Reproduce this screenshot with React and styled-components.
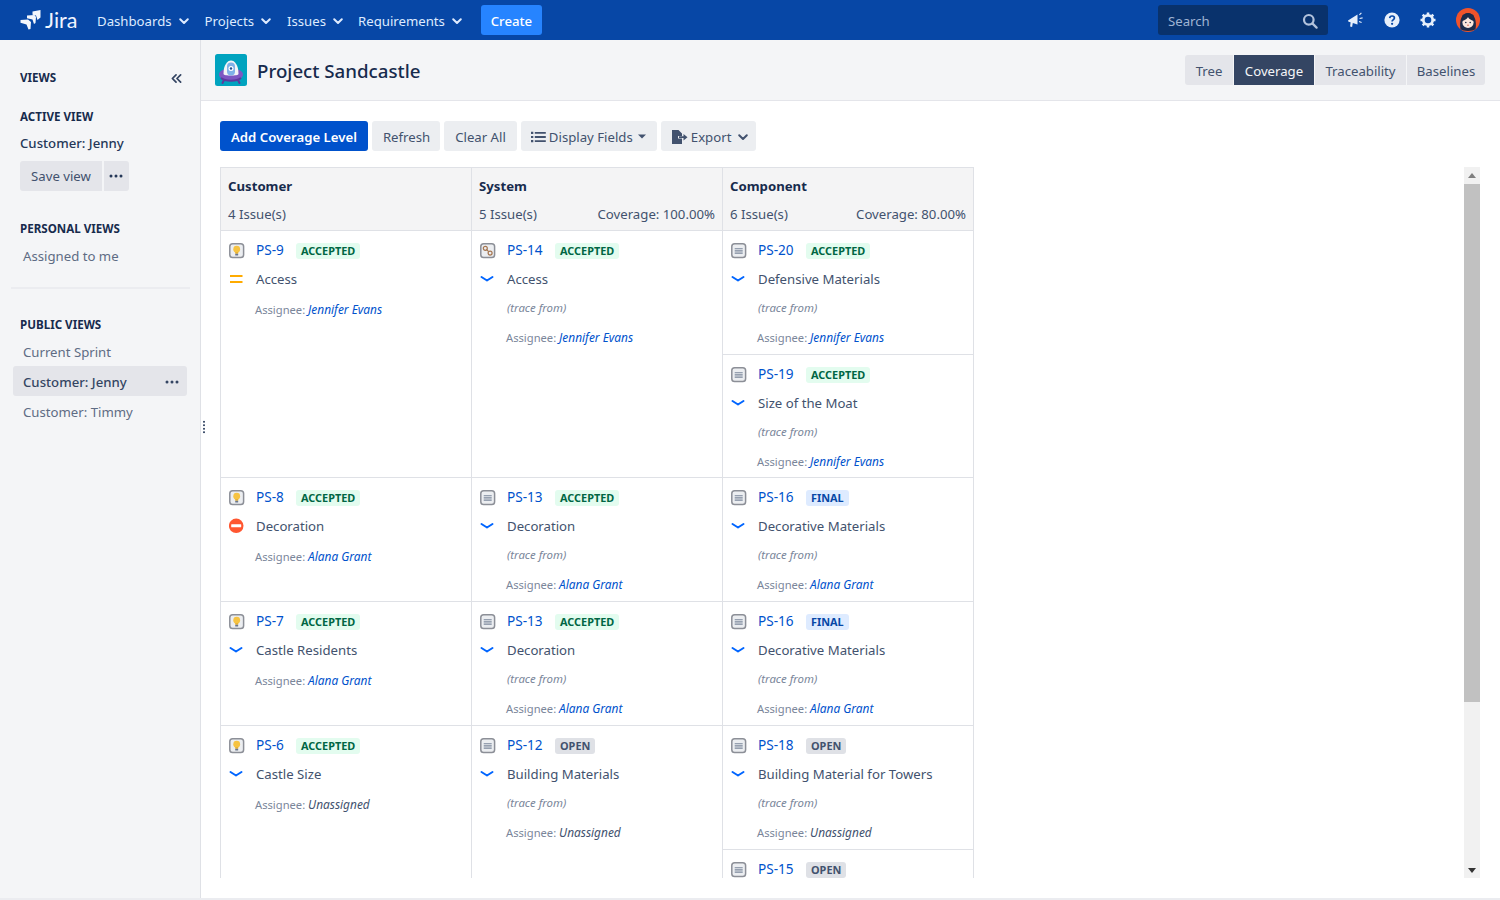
import React from "react";
import styled, { createGlobalStyle } from "styled-components";

const Global = createGlobalStyle`
  html, body { margin: 0; padding: 0; height: 100%; background: #fff; overflow: hidden; }
  body { font-family: "Noto Sans", "Open Sans", sans-serif; font-size: 13.2px; color: #172b4d; }
  * { box-sizing: border-box; }
`;

const Page = styled.div`
  width: 1500px; height: 900px; display: flex; flex-direction: column; overflow: hidden;
`;
const TopNav = styled.header`
  height: 40px; flex: none; background: #0747a6; display: flex; align-items: center; padding: 0 16px 0 20px;
`;
const Logo = styled.div`
  display: flex; align-items: center; gap: 3px; width: 77px; color: #deebff;
`;
const LogoText = styled.span`
  font-family: "Lato", sans-serif; font-size: 21.5px; font-weight: 400; line-height: 24px; color: #f0f5ff;
`;
const NavItem = styled.div`
  display: flex; align-items: center; color: #deebff; margin-left: ${p => p.$ml}px; gap: 6px; white-space: nowrap; padding-top: 1px;
`;
const CreateButton = styled.div`
  margin-left: 18px; width: 61px; height: 30px; padding-top: 1px; border-radius: 3px; background: #2684ff; color: #fff; display: flex; align-items: center; justify-content: center; font-weight: 500;
`;
const Spacer = styled.div`flex: 1;`;
const SearchBox = styled.div`
  width: 170px; height: 30px; border-radius: 3px; background: #09326c; color: #9fb4d3; display: flex; align-items: center; justify-content: space-between; padding: 1px 10px 0; margin-right: 18px;
`;
const NavIcon = styled.div`
  width: 20px; height: 20px; margin-right: 16px; display: flex; align-items: center; justify-content: center; color: #deebff;
`;
const Avatar = styled.div`width: 24px; height: 24px; margin: 0 4px 0 2px;`;

const Body = styled.div`flex: 1; min-height: 0; display: flex; border-bottom: 2px solid #ebecf0;`;
const Sidebar = styled.aside`
  width: 201px; flex: none; background: #f4f5f7; border-right: 1px solid #dfe1e6; position: relative; padding: 30px 13px 0 11px;
`;
const SideHead = styled.div`
  display: flex; justify-content: space-between; align-items: center; padding: 0 5px 0 9px; height: 16px; margin-bottom: 23px;
`;
const Heading = styled.div`
  font-size: 11.6px; font-weight: 700; color: #172b4d; line-height: 16px; padding-left: ${p => p.$pl ?? 9}px;
`;
const ActiveName = styled.div`
  font-weight: 500; padding-left: 9px; margin-top: 8px; line-height: 20px; color: #253858;
`;
const SaveRow = styled.div`display: flex; gap: 2px; padding-left: 9px; margin-top: 8px; margin-bottom: 30px;`;
const SaveBtn = styled.div`
  height: 30px; width: 82px; background: #e4e5ea; color: #42526e; border-radius: 3px 0 0 3px; display: flex; align-items: center; justify-content: center;
`;
const MoreBtn = styled.div`
  height: 30px; width: 25px; padding-right: 2px; background: #e4e5ea; color: #253858; border-radius: 0 3px 3px 0; display: flex; align-items: center; justify-content: center;
`;
const ViewItem = styled.div`
  height: 30px; border-radius: 3px; padding: 1px 8px 0 10px; display: flex; align-items: center; justify-content: space-between; color: ${p => p.$active ? "#344563" : "#5e6c84"}; font-weight: ${p => p.$active ? 500 : 400};
  background: ${p => p.$active ? "#e4e5ea" : "transparent"}; margin-left: 2px; width: 174px;
`;
const ViewList = styled.div`margin-top: 3px;`;
const Divider = styled.div`height: 2px; background: #ebecf0; margin: 17px 0 28px; width: 179px;`;
const Handle = styled.div`
  position: absolute; right: -5px; top: 380px; width: 2px; height: 14px;
  background-image: radial-gradient(circle, #42526e 1px, transparent 1.1px); background-size: 2px 3.5px;
`;
const Main = styled.main`flex: 1; min-width: 0; display: flex; flex-direction: column;`;
const ProjectBar = styled.div`
  height: 61px; flex: none; background: #f4f5f7; border-bottom: 1px solid #e4e5ea; display: flex; align-items: center; padding: 0 15px 0 14px;
`;
const ProjectTitle = styled.h1`margin: 1px 0 0 10px; font-size: 18.7px; font-weight: 500; color: #172b4d; line-height: 24px;`;
const Tabs = styled.div`margin-left: auto; display: flex; gap: 1px;`;
const Tab = styled.div`
  height: 30px; width: ${p => p.$w}px; padding-top: 1px; display: flex; align-items: center; justify-content: center; background: ${p => p.$on ? "#344563" : "#e4e5ea"}; color: ${p => p.$on ? "#f4f5f7" : "#42526e"};
  border-radius: ${p => p.$r || "0"};
`;
const Toolbar = styled.div`display: flex; gap: 4px; padding: 20px 0 0 19px; height: 66px; flex: none;`;
const Btn = styled.div`
  height: 30px; padding: 1px ${p => p.$pr ?? 11}px 0 ${p => p.$pl ?? 11}px; border-radius: 3px; display: flex; align-items: center; gap: 3px; white-space: nowrap;
  background: ${p => p.$primary ? "#0052cc" : "#eceef1"}; color: ${p => p.$primary ? "#fff" : "#42526e"}; font-weight: ${p => p.$primary ? 600 : 400};
`;
const BtnEnd = styled.span`display: flex; align-items: center; margin-left: ${p => p.$ml}px;`;
const ScrollArea = styled.div`flex: 1; min-height: 0; display: flex; padding: 0 20px 20px 19px; justify-content: space-between;`;
const TableClip = styled.div`
  width: 754px; overflow: hidden; height: 711px; border-left: 1px solid #dfe1e6; border-top: 1px solid #dfe1e6; border-right: 1px solid #dfe1e6;
`;
const Columns = styled.div`display: grid; grid-template-columns: 250px 251px 251px;`;
const Col = styled.div`display: flex; flex-direction: column; border-left: ${p => p.$first ? "none" : "1px solid #dfe1e6"};`;
const ColHead = styled.div`
  height: 63px; background: #f4f4f5; border-bottom: 1px solid #dfe1e6; padding: 8px 7px 0 7px;
`;
const ColTitle = styled.div`font-weight: 700; line-height: 20px; color: #172b4d;`;
const ColMeta = styled.div`display: flex; justify-content: space-between; margin-top: 8px; line-height: 20px; color: #42526e;`;
const Cell = styled.div`
  height: ${p => p.$h}px; flex: none; border-bottom: 1px solid #dfe1e6; padding: 10px 0 0 8px;
`;
const Line = styled.div`display: flex; align-items: center; height: 20px;`;
const IconSlot = styled.div`width: 27px; height: 20px; flex: none; display: flex; align-items: center; justify-content: flex-start;`;
const KeyLink = styled.span`color: #0052cc; font-size: 13.6px; line-height: 18px; padding-bottom: 2px; width: ${p => p.$w}px; white-space: nowrap;`;
const Lozenge = styled.span`
  height: 16px; padding: 0 5px; border-radius: 3px; font-size: 10.9px; font-weight: 700; line-height: 16px;
  background: ${p => ({ green: "#e3fcef", blue: "#deebff", grey: "#dfe1e6" })[p.$tone]};
  color: ${p => ({ green: "#006644", blue: "#0747a6", grey: "#42526e" })[p.$tone]};
`;
const Summary = styled.div`display: flex; align-items: center; height: 20px; margin-top: 8px; color: #42526e;`;
const Trace = styled.div`margin: 10px 0 0 27px; font-size: 11.4px; font-style: italic; color: #7a869a; line-height: 18px;`;
const Assignee = styled.div`
  margin: 11px 0 0 26px; font-size: 11.2px; color: #7a869a; line-height: 18px;
`;
const Person = styled.em`font-size: 11.9px; color: ${p => p.$none ? "#42526e" : "#0052cc"};`;
const ScrollBar = styled.div`
  width: 16px; height: 711px; background: #f1f1f1; display: flex; flex-direction: column; align-items: center;
`;
const Thumb = styled.div`width: 16px; height: 518px; background: #c1c1c1; flex: none;`;
const ArrowBox = styled.div`height: ${p => p.$h}px; flex: none; display: flex; align-items: center; justify-content: center;`;
const Track = styled.div`flex: 1;`;

const Chev = ({ c = "#deebff", w = 2 }) => (
  <svg width="12" height="12" viewBox="0 0 12 12" fill="none"><path d="M2.200 4.200 6 8l3.800-3.800" stroke={c} strokeWidth={w} strokeLinecap="round" strokeLinejoin="round" /></svg>
);
const Dots = () => (
  <svg width="14" height="4" viewBox="0 0 14 4" fill="currentColor"><circle cx="2" cy="2" r="1.500" /><circle cx="7" cy="2" r="1.500" /><circle cx="12" cy="2" r="1.500" /></svg>
);
const JiraMark = () => (
  <svg width="22" height="20" viewBox="0 0 22 20" fill="#f4f7fc">
    <path d="M12.500 1.500 20.500 0v7.500l-3 2.500-1.500-4.500-3.500-.8z" />
    <path d="M7 5.500l7.500-.5 1.500 2-.5 6-1.500 1-1.500-4.500-5.500-1.300z" />
    <path d="M0.500 10l7.500-.5 3 2.500-.5 7-2 .5-2-5-6-1.800z" />
  </svg>
);
const SearchIcon = () => (
  <svg width="16" height="16" viewBox="0 0 16 16" fill="none" stroke="#b3c3dc" strokeWidth="2.200" strokeLinecap="round"><circle cx="6.800" cy="6.800" r="4.800" /><path d="m10.600 10.600 4 4" /></svg>
);
const Megaphone = () => (
  <svg width="18" height="18" viewBox="0 0 18 18" fill="#e6effb">
    <path d="M1 9.500 10.500 3.500v10L5.800 12l-.7 4-2-.5.500-4.300L1.500 10.700z" />
    <path d="M12 3.500 14 1.500l.8.800-2 2zM12.500 7l3-.7.200 1.100-3 .7zM12.200 10l2.600 1-.4 1.100-2.600-1z" />
  </svg>
);
const HelpIcon = () => (
  <svg width="18" height="18" viewBox="0 0 18 18"><circle cx="9" cy="9" r="7.600" fill="#e6effb" /><path d="M6.700 7.100C6.800 5.700 7.800 5 9.100 5c1.400 0 2.300.8 2.300 2 0 1.900-2.300 1.900-2.300 3.500" fill="none" stroke="#0747a6" strokeWidth="1.700" /><circle cx="9.100" cy="12.800" r="1.100" fill="#0747a6" /></svg>
);
const GearIcon = () => (
  <svg width="18" height="18" viewBox="0 0 18 18" fill="none" stroke="#e6effb"><circle cx="9" cy="9" r="4.700" strokeWidth="2.800" /><path d="M9 1.500v2.500M9 14v2.500M1.500 9H4M14 9h2.500M3.700 3.700l1.800 1.800M12.500 12.500l1.800 1.800M14.300 3.700l-1.800 1.800M5.500 12.500l-1.800 1.800" strokeWidth="2.500" /></svg>
);
const AvatarArt = () => (
  <svg width="24" height="24" viewBox="0 0 24 24">
    <circle cx="12" cy="12" r="12" fill="#f0532b" />
    <path d="M4.500 21c-1.500-8 1-16 7.500-16s9 8 7.500 16c-2 2.600-13 2.600-15 0z" fill="#1c2b4a" />
    <ellipse cx="12" cy="14.500" rx="5.600" ry="5.400" fill="#fbe6dc" />
    <path d="M6 13c2.500-.6 5-2 6-4 1 2 3.500 3.400 6 4l-.5-6-5.500-2-5.500 2z" fill="#1c2b4a" />
    <circle cx="9.800" cy="14.500" r=".8" fill="#1c2b4a" /><circle cx="14.200" cy="14.500" r=".8" fill="#1c2b4a" />
    <path d="M11 17.200h2" stroke="#d9634f" strokeWidth=".9" />
  </svg>
);
const ProjectArt = () => (
  <svg width="32" height="32" viewBox="0 0 32 32">
    <rect width="32" height="32" rx="2.500" fill="#00a3bf" />
    <path d="M9 26l-1.500 3M23 26l1.500 3" stroke="#5e3a9e" strokeWidth="2" strokeLinecap="round" />
    <ellipse cx="16" cy="20.500" rx="12" ry="6.500" fill="#7e57c2" />
    <path d="M6 24c4 3.500 16 3.500 20 0" stroke="#5e3a9e" strokeWidth="2" fill="none" />
    <path d="M8.500 20c0-18 15-18 15 0 0 2-15 2-15 0z" fill="#f4f5f7" />
    <rect x="12" y="8.500" width="8" height="13" rx="4" fill="#7fb2e8" />
    <circle cx="16" cy="14.500" r="2.500" fill="#fff" /><circle cx="16" cy="14.500" r="1.200" fill="#1f4f8f" />
  </svg>
);
const Frame = ({ children }) => (
  <svg width="16" height="16" viewBox="0 0 16 16">
    <rect x=".8" y=".8" width="13.800" height="13.800" rx="2.800" fill="#eceef1" stroke="#8c8f97" strokeWidth="1.500" />
    <g transform="translate(-.3 -.3)">{children}</g>
  </svg>
);
const BulbIcon = () => (
  <Frame>
    <circle cx="8" cy="6.500" r="3.400" fill="#f6c342" />
    <path d="M6.500 9.500h3v1.500h-3z" fill="#e6a817" />
    <rect x="6.500" y="11" width="3" height="1.800" rx=".6" fill="#6b778c" />
  </Frame>
);
const DocIcon = () => (
  <Frame><path d="M4 6h8M4 8.200h8M4 10.400h8" stroke="#7a869a" strokeWidth="1.100" /></Frame>
);
const TraceIcon = () => (
  <Frame>
    <circle cx="5.600" cy="5.600" r="2" fill="none" stroke="#a5754f" strokeWidth="1.200" />
    <circle cx="10.400" cy="10.400" r="2" fill="none" stroke="#a5754f" strokeWidth="1.200" />
    <path d="M7 7l2 2" stroke="#a5754f" strokeWidth="1.200" />
  </Frame>
);
const MediumPri = () => (
  <svg width="16" height="16" viewBox="0 0 16 16"><path d="M1 5h12.500M1 11h12.500" stroke="#ffab00" strokeWidth="2" /></svg>
);
const LowPri = () => (
  <svg width="16" height="16" viewBox="0 0 16 16"><path d="M1.500 6 7 9.500 12.500 6" fill="none" stroke="#0065ff" strokeWidth="2" strokeLinecap="round" strokeLinejoin="round" /></svg>
);
const BlockerPri = () => (
  <svg width="16" height="16" viewBox="0 0 16 16"><circle cx="7.200" cy="7.800" r="7.300" fill="#ff5630" /><rect x="2.200" y="6.300" width="10" height="3" rx=".5" fill="#fff" /></svg>
);
const ListIcon = () => (
  <svg width="15" height="12" viewBox="0 0 15 12" fill="#42526e"><path d="M0 .8h2.300V3H0zM0 4.900h2.300v2.200H0zM0 9h2.300v2.200H0zM3.800 1h11v1.800h-11zM3.800 5.100h11v1.800h-11zM3.800 9.200h11V11h-11z" /></svg>
);
const ExportIcon = () => (
  <svg width="17" height="14" viewBox="0 0 17 14" fill="#42526e"><path d="M1 0h6.500L11 3.500V6H7v2.500h4V14H1z" /><path d="M8 6.300h4.500V4l4 3.200-4 3.200V8H8z" /></svg>
);
const Caret = () => (
  <svg width="8" height="5" viewBox="0 0 8 5" fill="#42526e"><path d="M0 .5h8L4 4.500z" /></svg>
);

const issueIcon = { bulb: <BulbIcon />, doc: <DocIcon />, trace: <TraceIcon /> };
const priIcon = { med: <MediumPri />, low: <LowPri />, block: <BlockerPri /> };

const IssueCell = ({ h, type, id, status, tone = "green", pri, title, trace, who, clipped }) => (
  <Cell $h={h}>
    <Line>
      <IconSlot>{issueIcon[type]}</IconSlot>
      <KeyLink $w={id.length === 5 ? 48 : 40}>{id}</KeyLink>
      <Lozenge $tone={tone}>{status}</Lozenge>
    </Line>
    {!clipped && (
      <>
        <Summary><IconSlot>{priIcon[pri]}</IconSlot>{title}</Summary>
        {trace && <Trace>(trace from)</Trace>}
        <Assignee>Assignee: <Person $none={who === "Unassigned"}>{who}</Person></Assignee>
      </>
    )}
  </Cell>
);

const J = "Jennifer Evans", A = "Alana Grant", U = "Unassigned";
const columns = [
  { title: "Customer", issues: "4 Issue(s)", rows: [
    { h: 247, type: "bulb", id: "PS-9", status: "ACCEPTED", pri: "med", title: "Access", who: J },
    { h: 124, type: "bulb", id: "PS-8", status: "ACCEPTED", pri: "block", title: "Decoration", who: A },
    { h: 124, type: "bulb", id: "PS-7", status: "ACCEPTED", pri: "low", title: "Castle Residents", who: A },
    { h: 248, type: "bulb", id: "PS-6", status: "ACCEPTED", pri: "low", title: "Castle Size", who: U },
  ] },
  { title: "System", issues: "5 Issue(s)", coverage: "Coverage: 100.00%", rows: [
    { h: 247, type: "trace", id: "PS-14", status: "ACCEPTED", pri: "low", title: "Access", trace: true, who: J },
    { h: 124, type: "doc", id: "PS-13", status: "ACCEPTED", pri: "low", title: "Decoration", trace: true, who: A },
    { h: 124, type: "doc", id: "PS-13", status: "ACCEPTED", pri: "low", title: "Decoration", trace: true, who: A },
    { h: 248, type: "doc", id: "PS-12", status: "OPEN", tone: "grey", pri: "low", title: "Building Materials", trace: true, who: U },
  ] },
  { title: "Component", issues: "6 Issue(s)", coverage: "Coverage: 80.00%", rows: [
    { h: 124, type: "doc", id: "PS-20", status: "ACCEPTED", pri: "low", title: "Defensive Materials", trace: true, who: J },
    { h: 123, type: "doc", id: "PS-19", status: "ACCEPTED", pri: "low", title: "Size of the Moat", trace: true, who: J },
    { h: 124, type: "doc", id: "PS-16", status: "FINAL", tone: "blue", pri: "low", title: "Decorative Materials", trace: true, who: A },
    { h: 124, type: "doc", id: "PS-16", status: "FINAL", tone: "blue", pri: "low", title: "Decorative Materials", trace: true, who: A },
    { h: 124, type: "doc", id: "PS-18", status: "OPEN", tone: "grey", pri: "low", title: "Building Material for Towers", trace: true, who: U },
    { h: 124, type: "doc", id: "PS-15", status: "OPEN", tone: "grey", clipped: true },
  ] },
];

export default function App() {
  return (
    <Page>
      <Global />
      <TopNav>
        <Logo><JiraMark /><LogoText>Jira</LogoText></Logo>
        <NavItem $ml={0}>Dashboards <Chev /></NavItem>
        <NavItem $ml={15}>Projects <Chev /></NavItem>
        <NavItem $ml={15}>Issues <Chev /></NavItem>
        <NavItem $ml={14}>Requirements <Chev /></NavItem>
        <CreateButton>Create</CreateButton>
        <Spacer />
        <SearchBox>Search<SearchIcon /></SearchBox>
        <NavIcon><Megaphone /></NavIcon>
        <NavIcon><HelpIcon /></NavIcon>
        <NavIcon><GearIcon /></NavIcon>
        <Avatar><AvatarArt /></Avatar>
      </TopNav>
      <Body>
        <Sidebar>
          <SideHead>
            <Heading $pl={0}>VIEWS</Heading>
            <svg width="11" height="11" viewBox="0 0 12 12" fill="none" stroke="#344563" strokeWidth="1.900" strokeLinecap="round" strokeLinejoin="round"><path d="M5.500 2 1.500 6l4 4M10.500 2l-4 4 4 4" /></svg>
          </SideHead>
          <Heading>ACTIVE VIEW</Heading>
          <ActiveName>Customer: Jenny</ActiveName>
          <SaveRow>
            <SaveBtn>Save view</SaveBtn>
            <MoreBtn><Dots /></MoreBtn>
          </SaveRow>
          <Heading>PERSONAL VIEWS</Heading>
          <ViewList><ViewItem>Assigned to me</ViewItem></ViewList>
          <Divider />
          <Heading>PUBLIC VIEWS</Heading>
          <ViewList>
            <ViewItem>Current Sprint</ViewItem>
            <ViewItem $active>Customer: Jenny <Dots /></ViewItem>
            <ViewItem>Customer: Timmy</ViewItem>
          </ViewList>
          <Handle />
        </Sidebar>
        <Main>
          <ProjectBar>
            <ProjectArt />
            <ProjectTitle>Project Sandcastle</ProjectTitle>
            <Tabs>
              <Tab $w={48} $r="3px 0 0 3px">Tree</Tab>
              <Tab $w={80} $on>Coverage</Tab>
              <Tab $w={91}>Traceability</Tab>
              <Tab $w={78} $r="0 3px 3px 0">Baselines</Tab>
            </Tabs>
          </ProjectBar>
          <Toolbar>
            <Btn $primary>Add Coverage Level</Btn>
            <Btn $pl={11} $pr={10}>Refresh</Btn>
            <Btn>Clear All</Btn>
            <Btn $pl={10}><ListIcon />Display Fields<BtnEnd $ml={2}><Caret /></BtnEnd></Btn>
            <Btn $pl={10} $pr={7}><ExportIcon />Export<BtnEnd $ml={3}><Chev c="#42526e" /></BtnEnd></Btn>
          </Toolbar>
          <ScrollArea>
            <TableClip>
              <Columns>
                {columns.map((c, i) => (
                  <Col key={c.title} $first={i === 0}>
                    <ColHead>
                      <ColTitle>{c.title}</ColTitle>
                      <ColMeta><span>{c.issues}</span>{c.coverage && <span>{c.coverage}</span>}</ColMeta>
                    </ColHead>
                    {c.rows.map((r, j) => <IssueCell key={j} {...r} />)}
                  </Col>
                ))}
              </Columns>
            </TableClip>
            <ScrollBar>
              <ArrowBox $h={17}><svg width="8" height="5" viewBox="0 0 8 5" fill="#7f7f7f"><path d="M4 0l4 5H0z" /></svg></ArrowBox>
              <Thumb />
              <Track />
              <ArrowBox $h={16}><svg width="8" height="5" viewBox="0 0 8 5" fill="#333"><path d="M0 0h8L4 5z" /></svg></ArrowBox>
            </ScrollBar>
          </ScrollArea>
        </Main>
      </Body>
    </Page>
  );
}
